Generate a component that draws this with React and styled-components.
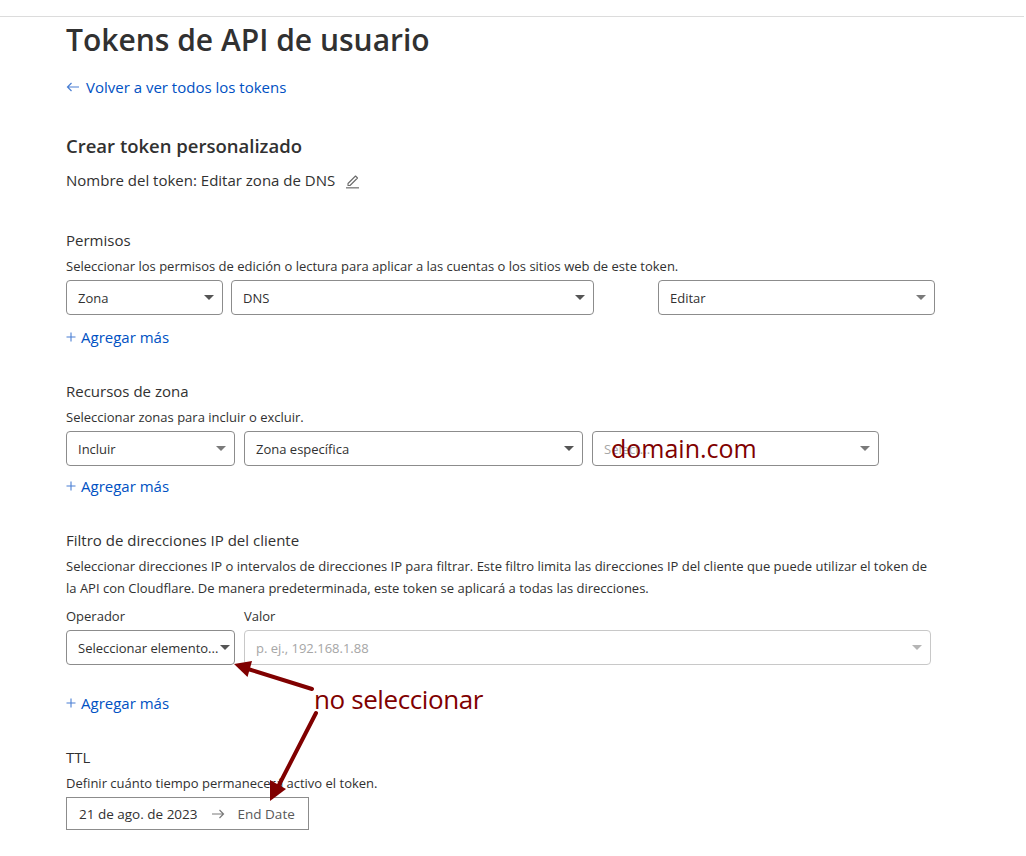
import React from "react";
import styled, { createGlobalStyle } from "styled-components";

const Global = createGlobalStyle`
  html, body { margin: 0; padding: 0; background: #fff; }
  body { font-family: "Open Sans", "Noto Sans", sans-serif; color: #313131; }
  * { box-sizing: border-box; }
`;

const Page = styled.div`
  position: relative;
  width: 1026px;
  min-height: 856px;
`;

const TopBar = styled.div`
  height: 17px;
  border-bottom: 1px solid #dcdcdc;
  margin-right: 2px;
`;

const Main = styled.main`
  padding: 0 0 0 66px;
  width: 960px;
`;

const Title = styled.h1`
  margin: 3px 0 0;
  font-size: 30px;
  font-weight: 600;
  line-height: 40px;
  color: #313131;
`;

const BackLink = styled.a`
  display: flex;
  align-items: center;
  gap: 6px;
  margin-top: 16px;
  font-size: 15px;
  line-height: 22px;
  color: #0051c3;
  text-decoration: none;
`;

const SubTitle = styled.h2`
  margin: 35px 0 0;
  font-size: 18.5px;
  font-weight: 600;
  line-height: 26px;
`;

const NameRow = styled.div`
  display: flex;
  align-items: center;
  gap: 10px;
  margin-top: 10px;
  font-size: 15px;
  line-height: 22px;
`;

const Section = styled.section`
  margin-top: ${(p) => p.$mt}px;
`;

const Heading = styled.h3`
  margin: 0;
  font-size: 15px;
  font-weight: 400;
  line-height: 24px;
`;

const Desc = styled.p`
  margin: 3px 0 0;
  font-size: 13px;
  line-height: 22px;
  width: ${(p) => p.$w || "auto"};
`;

const Row = styled.div`
  display: grid;
  grid-template-columns: ${(p) => p.$cols};
  column-gap: ${(p) => p.$gap || 8}px;
  margin-top: ${(p) => p.$mt || 3}px;
`;

const FieldLabel = styled.div`
  font-size: 13px;
  line-height: 22px;
`;

const SelectBox = styled.div`
  position: relative;
  display: flex;
  align-items: center;
  justify-content: space-between;
  gap: 2px;
  height: 35px;
  padding: 0 ${(p) => p.$pr || 8}px 0 11px;
  border: 1px solid ${(p) => (p.$muted ? "#c8c8c8" : "#8c8c8c")};
  border-radius: 4px;
  font-size: 13px;
  color: ${(p) => (p.$placeholder ? "#a6a6a6" : "#313131")};
  background: #fff;
  grid-column-start: ${(p) => p.$col || "auto"};
`;

const SelectText = styled.span`
  white-space: nowrap;
`;

const Caret = styled.span`
  flex: none;
  width: 0;
  height: 0;
  border-left: 5px solid transparent;
  border-right: 5px solid transparent;
  border-top: 5px solid ${(p) => p.$color || "#555"};
`;

const AddMore = styled.a`
  display: flex;
  align-items: center;
  gap: 5px;
  margin-top: ${(p) => p.$mt}px;
  font-size: 15px;
  line-height: 22px;
  color: #0051c3;
  text-decoration: none;
`;

const DateBox = styled.div`
  display: inline-flex;
  align-items: center;
  gap: 13px;
  margin-top: 3px;
  height: 33px;
  padding: 0 13px 0 12px;
  border: 1px solid #8c8c8c;
  font-size: 13.5px;
`;

const DateEnd = styled.span`
  color: #595959;
`;

const Annotation = styled.span`
  position: absolute;
  color: #800000;
  font-size: ${(p) => p.$size}px;
  line-height: 1;
  white-space: nowrap;
  pointer-events: none;
`;

const DomainNote = styled(Annotation)`
  left: 18px;
  top: 4px;
`;

const ArrowNote = styled(Annotation)`
  left: 314px;
  top: 686px;
  letter-spacing: -0.4px;
`;

const Overlay = styled.svg`
  position: absolute;
  left: 0;
  top: 0;
  pointer-events: none;
`;

const BackArrow = () => (
  <svg width="14" height="10" viewBox="0 0 14 10" fill="none">
    <path d="M13 5H1.5M5.5 1L1.5 5L5.5 9" stroke="#4a7fd3" strokeWidth="1.2" />
  </svg>
);

const Pencil = () => (
  <svg width="15" height="17" viewBox="0 0 15 17" fill="none">
    <path d="M3 11.5L10.5 4L12.5 6L5 13.5H3Z" stroke="#6b6b6b" strokeWidth="1.1" strokeLinejoin="round" />
    <path d="M1 15.8H14" stroke="#8a8a8a" strokeWidth="1.5" />
  </svg>
);

const Plus = () => (
  <svg width="10" height="10" viewBox="0 0 10 10" fill="none">
    <path d="M5 0.5V9.5M0.5 5H9.5" stroke="#4a7fd3" strokeWidth="1.1" />
  </svg>
);

const RightArrow = () => (
  <svg width="14" height="10" viewBox="0 0 14 10" fill="none">
    <path d="M1 5H12.5M8.5 1L12.5 5L8.5 9" stroke="#7a7a7a" strokeWidth="1.2" />
  </svg>
);

const Select = ({ value, placeholder, muted, caret, pr, col, children }) => (
  <SelectBox $muted={muted} $placeholder={!!placeholder} $pr={pr} $col={col}>
    <SelectText>{value || placeholder}</SelectText>
    <Caret $color={caret} />
    {children}
  </SelectBox>
);

export default function App() {
  return (
    <Page>
      <Global />
      <TopBar />
      <Main>
        <Title>Tokens de API de usuario</Title>
        <BackLink href="#">
          <BackArrow />
          Volver a ver todos los tokens
        </BackLink>

        <SubTitle>Crear token personalizado</SubTitle>
        <NameRow>
          Nombre del token: Editar zona de DNS
          <Pencil />
        </NameRow>

        <Section $mt={37}>
          <Heading>Permisos</Heading>
          <Desc>
            Seleccionar los permisos de edición o lectura para aplicar a las cuentas o los sitios web de este token.
          </Desc>
          <Row $cols="157px 363px 48px 277px" $gap={8}>
            <Select value="Zona" />
            <Select value="DNS" />
            <Select value="Editar" caret="#7a7a7a" col={4} />
          </Row>
          <AddMore href="#" $mt={11}>
            <Plus />
            Agregar más
          </AddMore>
        </Section>

        <Section $mt={31}>
          <Heading>Recursos de zona</Heading>
          <Desc>Seleccionar zonas para incluir o excluir.</Desc>
          <Row $cols="169px 339px 287px" $gap={9}>
            <Select value="Incluir" caret="#7a7a7a" />
            <Select value="Zona específica" />
            <Select placeholder="Select..." caret="#7a7a7a">
              <DomainNote $size={25}>domain.com</DomainNote>
            </Select>
          </Row>
          <AddMore href="#" $mt={9}>
            <Plus />
            Agregar más
          </AddMore>
        </Section>

        <Section $mt={31}>
          <Heading>Filtro de direcciones IP del cliente</Heading>
          <Desc $w="866px">
            Seleccionar direcciones IP o intervalos de direcciones IP para filtrar. Este filtro limita las direcciones IP del cliente que puede utilizar el token de la API con Cloudflare. De manera predeterminada, este token se aplicará a todas las direcciones.
          </Desc>
          <Row $cols="169px 687px" $gap={9} $mt={6}>
            <FieldLabel>Operador</FieldLabel>
            <FieldLabel>Valor</FieldLabel>
          </Row>
          <Row $cols="169px 687px" $gap={9}>
            <Select value="Seleccionar elemento..." pr={8} />
            <Select placeholder="p. ej., 192.168.1.88" muted caret="#b5b5b5" />
          </Row>
          <AddMore href="#" $mt={27}>
            <Plus />
            Agregar más
          </AddMore>
        </Section>

        <Section $mt={31}>
          <Heading>TTL</Heading>
          <Desc>Definir cuánto tiempo permanecerá activo el token.</Desc>
          <DateBox>
            <span>21 de ago. de 2023</span>
            <RightArrow />
            <DateEnd>End Date</DateEnd>
          </DateBox>
        </Section>
      </Main>

      <ArrowNote $size={26}>no seleccionar</ArrowNote>
      <Overlay width="1026" height="856" viewBox="0 0 1026 856">
        <path d="M312 689L248 669" stroke="#800000" strokeWidth="4" strokeLinecap="round" />
        <polygon points="234,664 252,661 247.5,677" fill="#800000" />
        <path d="M316 713L279 785" stroke="#800000" strokeWidth="4" strokeLinecap="round" />
        <polygon points="270,801 286,789 270,780" fill="#800000" />
      </Overlay>
    </Page>
  );
}
